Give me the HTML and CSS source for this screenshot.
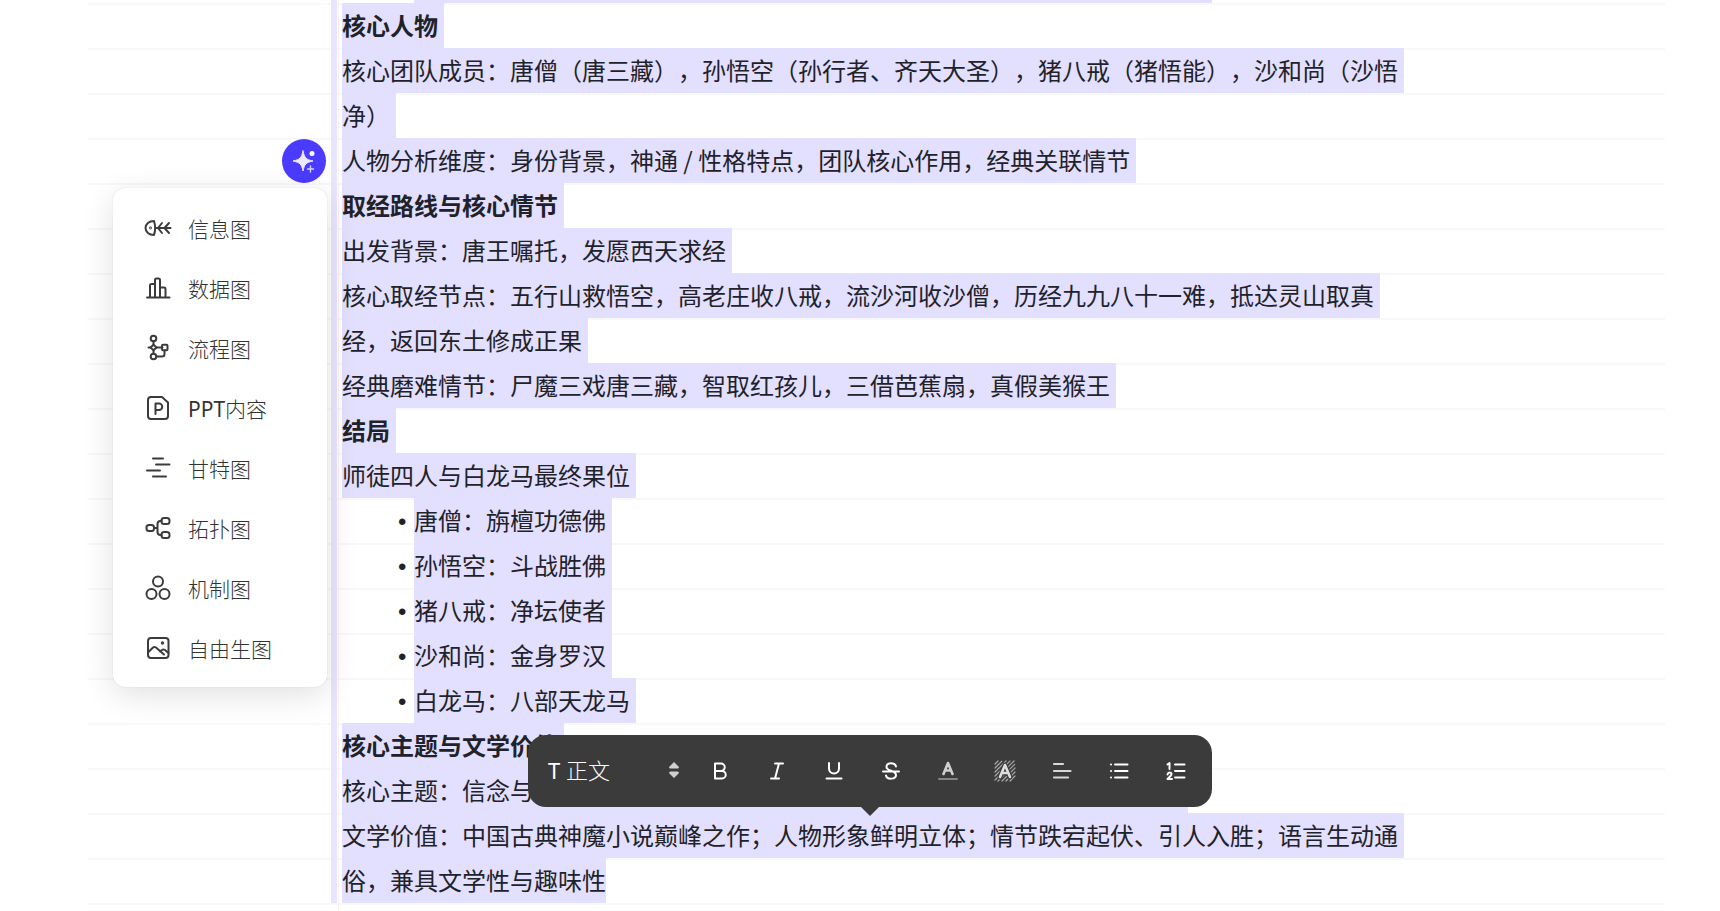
FILE: index.html
```html
<!DOCTYPE html>
<html lang="zh-CN">
<head>
<meta charset="utf-8">
<title>西游记</title>
<link rel="stylesheet" href="styles.css">
</head>
<body>
<main class="sheet">
  <div class="margin-bar"></div>
  <article class="doc">
    <div class="prev-line"></div>
    <h2><span class="sel">核心人物</span></h2>
    <p><span class="sel">核心团队成员：唐僧（唐三藏），孙悟空（孙行者、齐天大圣），猪八戒（猪悟能），沙和尚（沙悟净）</span></p>
    <p><span class="sel">人物分析维度：身份背景，神通 / 性格特点，团队核心作用，经典关联情节</span></p>
    <h2><span class="sel">取经路线与核心情节</span></h2>
    <p><span class="sel">出发背景：唐王嘱托，发愿西天求经</span></p>
    <p><span class="sel">核心取经节点：五行山救悟空，高老庄收八戒，流沙河收沙僧，历经九九八十一难，抵达灵山取真经，返回东土修成正果</span></p>
    <p><span class="sel">经典磨难情节：尸魔三戏唐三藏，智取红孩儿，三借芭蕉扇，真假美猴王</span></p>
    <h2><span class="sel">结局</span></h2>
    <p><span class="sel">师徒四人与白龙马最终果位</span></p>
    <ul>
      <li><span class="sel">唐僧：旃檀功德佛</span></li>
      <li><span class="sel">孙悟空：斗战胜佛</span></li>
      <li><span class="sel">猪八戒：净坛使者</span></li>
      <li><span class="sel">沙和尚：金身罗汉</span></li>
      <li><span class="sel">白龙马：八部天龙马</span></li>
    </ul>
    <h2><span class="sel">核心主题与文学价值</span></h2>
    <p><span class="sel sel-long">核心主题：信念与</span></p>
    <p><span class="sel">文学价值：中国古典神魔小说巅峰之作；人物形象鲜明立体；情节跌宕起伏、引人入胜；语言生动通</span><span class="sel sel-last">俗，兼具文学性与趣味性</span></p>
  </article>
</main>

<button class="ai" aria-label="AI">
  <svg width="24" height="24" viewBox="0 0 24 24"><path d="M11 2C12.500 9 14 10.500 21 12C14 13.500 12.500 15 11 22C9.500 15 8 13.500 1 12C8 10.500 9.500 9 11 2Z" class="spark"/><circle cx="20" cy="4.500" r="2.500" class="dot"/><path d="M18.500 17v6M15.500 20h6" stroke="#d8d3ff" stroke-width="1.400"/></svg>
</button>

<nav class="menu">
  <button><svg viewBox="0 0 28 28"><path d="M10 7C5 7 1.500 10 1.500 14S5 21 10 21C11.500 16.500 11.500 11.500 10 7ZM11 14H26.500M18 9l-4 5 4 5M25 9l-4.500 5 4.500 5"/><circle cx="6.500" cy="14" r=".4"/></svg>信息图</button>
  <button><svg viewBox="0 0 28 28"><path d="M3 23.500H25.500M6 23.500V11.500q0-1.500 1.500-1.500H11M11 23.500V6q0-1.500 1.500-1.500h2q1.500 0 1.500 1.500V23.500M16 13.500h4q1.500 0 1.500 1.500v8.500"/></svg>数据图</button>
  <button><svg viewBox="0 0 28 28"><circle cx="9.500" cy="4.500" r="2.800"/><circle cx="9.500" cy="22.500" r="2.800"/><path d="M9.500 7.500v3M9.500 16.500v3M4.500 13.500h2M12.500 13.500h6M12.500 22.500H18q2.500 0 2.500-2.500v-3.500"/><path d="M9.500 10.800l3 2.700-3 2.700-3-2.700z"/><rect x="18" y="10.800" width="5.500" height="5.500" rx="1"/></svg>流程图</button>
  <button><svg viewBox="0 0 28 28"><path d="M7 3H18L24 8.500V22q0 3-3 3H7q-3 0-3-3V6q0-3 3-3ZM11.500 20V9.500h3.500a3 3 0 0 1 0 6.500h-3.500"/></svg><span><span class="latin">PPT</span>内容</span></button>
  <button><svg viewBox="0 0 28 28"><path d="M9 4.500H19M12 10.500H25.500M3 16.500H16M9 22.500H22"/></svg>甘特图</button>
  <button><svg viewBox="0 0 28 28"><rect x="2.500" y="11" width="7.500" height="6" rx="2.500"/><rect x="17.500" y="4" width="8" height="6" rx="2.500"/><rect x="17.500" y="18" width="8" height="6" rx="2.500"/><path d="M10 14h3.500M17.500 7h-1q-3 0-3 3v8q0 3 3 3h1"/></svg>拓扑图</button>
  <button><svg viewBox="0 0 28 28"><circle cx="14" cy="7.500" r="5"/><circle cx="7.500" cy="20" r="5"/><circle cx="20.500" cy="20" r="5"/></svg>机制图</button>
  <button><svg viewBox="0 0 28 28"><rect x="4" y="4" width="20.500" height="20" rx="3"/><circle cx="18.500" cy="9" r=".7"/><path d="M4.500 18l4.500-4.500q1.500-1 3 0L20 20.500M16 17.500l2-1.500q1.500-1 3 0l3.500 3"/></svg>自由生图</button>
</nav>

<div class="toolbar" role="toolbar">
  <button class="style"><span><span class="latin">T</span> 正文</span><svg class="arrows" width="10" height="18" viewBox="0 0 10 18"><path d="M5 1L10 6q0 1.500-1.500 1.500h-7Q0 7.500 0 6ZM5 17L10 12q0-1.500-1.500-1.500h-7Q0 10.500 0 12Z"/></svg></button>
  <button aria-label="粗体"><svg viewBox="0 0 24 24"><path d="M7 4.500h6a3.500 3.500 0 0 1 0 7.500H7ZM7 12h7a3.700 3.700 0 0 1 0 7.500H7Z"/></svg></button>
  <button aria-label="斜体"><svg viewBox="0 0 24 24"><path d="M10 4.500h8M6 19.500h8M14 4.500L10 19.500"/></svg></button>
  <button aria-label="下划线"><svg viewBox="0 0 24 24"><path d="M7 4v5.500a5 5 0 0 0 10 0V4M4.500 19.500h15"/></svg></button>
  <button aria-label="删除线"><svg viewBox="0 0 24 24"><path d="M17 7.500C16 3 7.500 3 7.500 8c0 4.500 9.500 3 9.500 8 0 4.500-9 5-10 .5M4 12.500h16"/></svg></button>
  <button aria-label="文字颜色"><svg viewBox="0 0 24 24"><path d="M7.500 15L12 4l4.500 11M9 11.500h6" stroke="#cfcfcf" stroke-width="2.600"/><path d="M3 20h18" stroke="#858585" stroke-width="2"/></svg></button>
  <button aria-label="背景颜色"><svg viewBox="0 0 24 24"><path d="M2 5l3-3M2 9l7-7M2 13L13 2M2 17L17 2M2 21L21 2M5 22L22 5M9 22L22 9M13 22l9-9M17 22l5-5" stroke="#aaa" stroke-width="1.200" stroke-dasharray="2.500 1"/><path d="M7 18l5-12 5 12M9 14h6" stroke="#3b3b3b" stroke-width="5"/><path d="M7 18l5-12 5 12M9 14h6" stroke="#dedede" stroke-width="2.600"/></svg></button>
  <button aria-label="对齐"><svg viewBox="0 0 24 24"><path d="M4 5h9M4 12h16.500M4 18.500h14" stroke="#d8d8d8" stroke-width="2.200"/></svg></button>
  <button aria-label="无序列表"><svg viewBox="0 0 24 24"><path d="M8 5.500h12.500M8 12h12.500M8 18.500h12.500M4 5.500h.1M4 12h.1M4 18.500h.1"/></svg></button>
  <button aria-label="有序列表"><svg viewBox="0 0 24 24"><path d="M11 5.500h9.500M11 12h9.500M11 18.500h9.500M3.500 5.500L5.500 4v6M3.500 15.500q.5-2 2-2c2.500 0 2.500 2 1 3.500l-3 3H8"/></svg></button>
</div>
</body>
</html>
```
FILE: styles.css
```css
*, *::before { box-sizing: border-box; }
body {
  margin: 0;
  min-height: 100vh;
  background: #fff;
  color: #1f2329;
  font-family: "Noto Sans", "Noto Sans CJK SC", sans-serif;
  text-spacing-trim: space-all;
  overflow: hidden;
}
button { border: 0; background: none; padding: 0; font: inherit; color: inherit; }
svg { fill: none; stroke-linecap: round; stroke-linejoin: round; flex: none; }
.latin { font-weight: 400; }
.sheet {
  display: flex;
  align-items: flex-start;
  margin: 0 55px 0 88px;
  min-height: 100vh;
  background: repeating-linear-gradient(#fff 0 3px, #f8f8f9 3px 5px, #fff 5px 45px);
}
.margin-bar { width: 6px; height: 903px; margin-left: 243px; background: #e8e6ff; }
.doc {
  flex: 1;
  min-height: 100vh;
  margin-left: 1px;
  padding-left: 3px;
  border-left: 1px solid #fbeef2;
  font-family: "Noto Sans CJK SC", sans-serif;
  font-size: 24px;
  line-height: 45px;
}
.doc h2, .doc p, .doc ul { margin: 0; max-width: 1068px; font-size: 24px; }
.doc h2 { font-weight: 700; }
.doc ul { padding: 0; list-style: none; }
.doc li { padding-left: 54px; }
.doc li::before {
  content: "•";
  display: inline-block;
  width: 18px;
  padding-left: 2px;
  font-family: "Liberation Sans", sans-serif;
  line-height: 24px;
}
.prev-line { height: 3px; max-width: 798px; margin: 0 0 -1px 72px; background: #e2dfff; }
.sel {
  padding: 4px 6px 6px 0;
  background: #e2dfff;
  -webkit-box-decoration-break: clone;
  box-decoration-break: clone;
}
.sel-long { padding-right: 654px; }
.sel-last { padding-right: 0; }
.ai {
  position: absolute;
  left: 282px;
  top: 139px;
  display: grid;
  place-items: center;
  width: 44px;
  height: 44px;
  border-radius: 50%;
  background: #4b3bff;
}
.ai .spark { fill: #ece9ff; stroke: #ece9ff; }
.ai .dot { fill: #fff; }
.menu {
  position: absolute;
  left: 113px;
  top: 188px;
  display: flex;
  flex-direction: column;
  width: 214px;
  padding: 10px 0 9px;
  border-radius: 12px;
  background: #fff;
  box-shadow: 0 8px 32px rgba(0, 0, 0, .12), 0 0 1px rgba(0, 0, 0, .2);
  color: #333;
  font-size: 21px;
  font-weight: 300;
}
.menu button { display: flex; align-items: center; gap: 16px; height: 60px; padding-left: 31px; }
.menu svg { width: 28px; height: 28px; stroke: #3b3b3b; stroke-width: 2; }
.toolbar {
  position: absolute;
  left: 528px;
  top: 735px;
  display: flex;
  align-items: center;
  gap: 33px;
  height: 72px;
  padding: 0 24px 0 20px;
  border-radius: 18px;
  background: #3b3b3b;
  color: #fff;
}
.toolbar::after {
  content: "";
  position: absolute;
  left: 50%;
  top: 100%;
  margin-left: -9px;
  border: 9px solid transparent;
  border-top-color: #3b3b3b;
  border-bottom: 0;
}
.toolbar button { display: flex; align-items: center; width: 24px; height: 24px; }
.toolbar .style { justify-content: space-between; width: 131px; margin-right: -4px; padding-bottom: 2px; font-size: 22px; line-height: 24px; font-weight: 300; }
.toolbar .arrows { fill: #cfcfcf; }
.toolbar button > svg[viewBox="0 0 24 24"] { width: 24px; height: 24px; stroke: #fff; stroke-width: 2; }
```
